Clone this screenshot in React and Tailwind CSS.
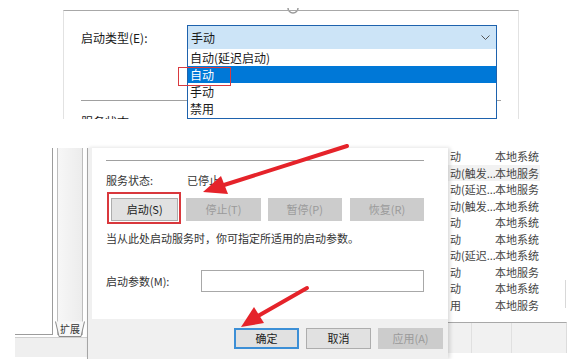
import React from 'react';

const font = { fontFamily: '"Noto Sans CJK SC", "Noto Sans", sans-serif' };

const services = [
  ['动', '本地系统'],
  ['动(触发...', '本地服务'],
  ['动(延迟...', '本地服务'],
  ['动(触发...', '本地系统'],
  ['动', '本地系统'],
  ['动', '本地系统'],
  ['动(延迟...', '本地系统'],
  ['动', '本地服务'],
  ['动', '本地系统'],
  ['用', '本地服务'],
];

function WinButton({ children, disabled, focused, className = '' }) {
  return (
    <div
      className={
        'flex items-center justify-center text-[11px] border ' +
        (disabled
          ? 'bg-[#cccccc] border-[#cccccc] text-[#9a9a9a] '
          : focused
          ? 'bg-[#e1e1e1] border-[#3c8fd6] border-2 text-[#222] '
          : 'bg-[#e1e1e1] border-[#adadad] text-[#222] ') +
        className
      }
    >
      {children}
    </div>
  );
}

export default function App() {
  return (
    <div className="relative w-[587px] h-[359px] overflow-hidden bg-white text-[#1a1a1a]" style={font}>
      {/* top screenshot: startup type dropdown */}
      <div className="relative h-[148px] pt-[10px]">
        <svg className="absolute left-[285px] top-0" width="16" height="16" viewBox="0 0 16 16">
          <path d="M3 8 A5 5 0 0 0 13 8" fill="none" stroke="#9a9a9a" strokeWidth="1.5" />
        </svg>
        <div className="relative ml-[63px] w-[456px] h-[109px] border-t border-[#a8a8a8] border-x border-x-[#e2e2e2] overflow-hidden">
          <div className="flex items-center mt-[14px] pl-[17px]">
            <div className="w-[106px] text-[12px] leading-[16px]">启动类型(E):</div>
            <div className="w-[310px] h-[25px] bg-[#cce4f7] border border-[#1e62ad] flex items-center justify-between pl-[3px] pr-[6px]">
              <span className="text-[12px] leading-[16px]">手动</span>
              <svg width="9" height="6" viewBox="0 0 9 6">
                <polyline points="0.5,0.5 4.5,4.5 8.5,0.5" fill="none" stroke="#555" strokeWidth="1" />
              </svg>
            </div>
          </div>
          <div className="ml-[17px] mt-[50px] w-[420px] border-t border-[#a0a0a0]" />
          <div className="ml-[17px] mt-[13px] text-[12px] leading-[16px]">服务状态:</div>

          {/* open dropdown list */}
          <div className="absolute left-[123px] top-[38px] w-[310px] h-[70px] bg-white border border-[#1e62ad] border-t-0 text-[12px] leading-[17px]">
            <div className="h-[17px] pl-[2px]">自动(延迟启动)</div>
            <div className="h-[17px] pl-[2px] bg-[#0078d7] text-white">自动</div>
            <div className="h-[17px] pl-[2px]">手动</div>
            <div className="h-[17px] pl-[2px]">禁用</div>
          </div>
        </div>
        <div className="absolute left-[178px] top-[67px] w-[53px] h-[19px] border border-[#d93a3f]" />
      </div>

      {/* bottom screenshot: properties dialog over services list */}
      <div className="flex ml-[15px] w-[552px] h-[211px]">
        {/* left pane */}
        <div className="w-[72px] flex flex-col">
          <div className="flex h-[187px]">
            <div className="w-[38px] bg-white border-r border-b border-[#9c9c9c]" />
            <div className="w-[4px]" />
            <div className="relative w-[26px] bg-gradient-to-r from-[#f7f7f7] to-[#ececec] border-x border-[#bdbdbd]">
              <div className="absolute left-[-3px] bottom-[-2px] w-[30px] h-[16px] flex items-center justify-center">
                <svg className="absolute inset-0" width="30" height="16" viewBox="0 0 30 16">
                  <path d="M0.5 0.5 L4 15.5 L26 15.5 L29.5 0.5" fill="#f7f7f7" stroke="#8a8a8a" strokeWidth="1" />
                </svg>
                <span className="relative text-[10px] leading-[12px] text-[#333]">扩展</span>
              </div>
            </div>
          </div>
          <div className="h-[20px] mt-[2px] bg-[#efefef] border-t border-[#cfcfcf]" />
        </div>

        {/* dialog */}
        <div className="w-[361px] flex flex-col bg-[#f0f0f0] border-l border-[#a5a5a5] shadow-[2px_0_4px_rgba(0,0,0,0.15)] z-10">
          <div className="ml-[4px] h-[171px] bg-white pl-[14px] pr-[24px] text-[11px] text-[#333]">
            <div className="pt-[12px]">
              <div className="border-t border-[#a0a0a0]" />
            </div>
            <div className="flex items-center mt-[11px] h-[16px]">
              <span className="w-[81px]">服务状态:</span>
              <span>已停止</span>
            </div>
            <div className="flex mt-[10px] h-[23px]">
              <WinButton className="w-[68px] ml-[5px]">启动(S)</WinButton>
              <WinButton disabled className="w-[75px] ml-[8px]">停止(T)</WinButton>
              <WinButton disabled className="w-[75px] ml-[7px]">暂停(P)</WinButton>
              <WinButton disabled className="w-[75px] ml-[8px]">恢复(R)</WinButton>
            </div>
            <div className="mt-[9px] leading-[16px]">当从此处启动服务时，你可指定所适用的启动参数。</div>
            <div className="flex items-center mt-[24px]">
              <span className="w-[96px]">启动参数(M):</span>
              <div className="w-[225px] h-[22px] border border-[#a8a8a8] bg-white" />
            </div>
          </div>
          <div className="flex justify-end gap-[7px] pt-[9px] pr-[5px]">
            <WinButton focused className="w-[65px] h-[21px]">确定</WinButton>
            <WinButton className="w-[65px] h-[21px]">取消</WinButton>
            <WinButton disabled className="w-[65px] h-[21px]">应用(A)</WinButton>
          </div>
        </div>

        {/* services list */}
        <div className="w-[119px] flex flex-col">
          <div className="relative h-[174px] bg-white text-[11px] text-[#444]">
            {services.map(([a, b], i) => (
              <div key={i} className={'flex items-center h-[16.5px] pl-[2px] w-[92px] ' + (i === 1 ? 'bg-[#f2f2f2]' : '')}>
                <span className="w-[45px] whitespace-nowrap overflow-hidden">{a}</span>
                <span className="whitespace-nowrap">{b}</span>
              </div>
            ))}
            <div className="absolute right-[1px] top-[132px] h-[28px] border-r border-[#d8d8d8]" />
          </div>
          <div className="flex h-[31px] bg-[#f1f1f1] border-t border-[#a8a8a8] border-r border-r-[#dcdcdc]">
            <div className="w-[24px] border-r border-[#e0e0e0]" />
            <div className="w-[40px] border-r border-[#e0e0e0]" />
          </div>
        </div>
      </div>

      {/* red arrows */}
      <svg className="absolute inset-0 pointer-events-none z-20" width="587" height="359" viewBox="0 0 587 359">
        <line x1="347" y1="146" x2="224" y2="185" stroke="#e5232a" strokeWidth="4" strokeLinecap="round" />
        <polygon points="203,192 228,194 221,176" fill="#e5232a" />
        <line x1="307" y1="288" x2="258" y2="316" stroke="#e5232a" strokeWidth="4" strokeLinecap="round" />
        <polygon points="241,327 264,323 254,307" fill="#e5232a" />
      </svg>
      <div className="absolute left-[107px] top-[192px] w-[74px] h-[32px] border-2 border-[#d9383d] z-20" />
    </div>
  );
}
